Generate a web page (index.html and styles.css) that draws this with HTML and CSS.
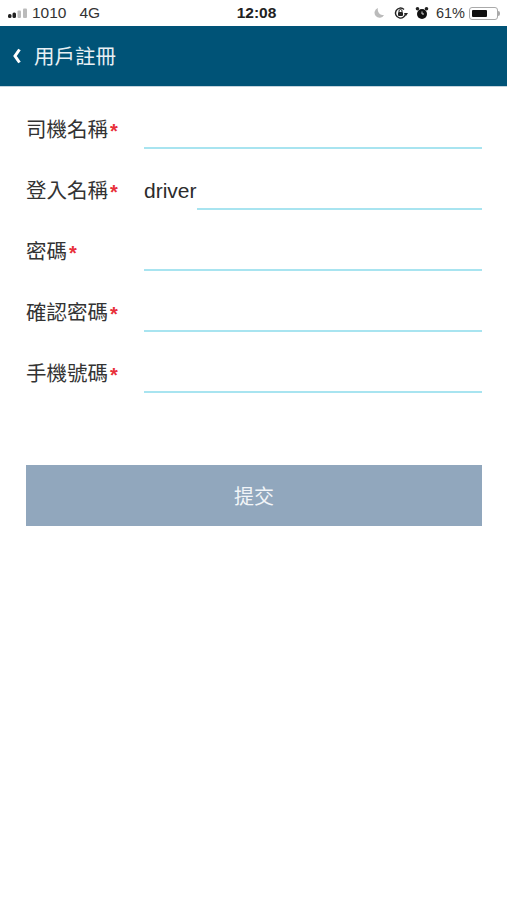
FILE: index.html

```html
<!DOCTYPE html>
<html lang="zh-Hant">
<head>
  <meta charset="UTF-8" />
  <title>用戶註冊</title>
  <link rel="stylesheet" href="styles.css">
</head>
<body>
  <div class="status-bar">
    <div class="status-left">
      <svg class="signal" width="21" height="10" viewBox="0 0 21 10">
        <rect x="0" y="6" width="3.500" height="4" rx="1.500" fill="#222"/>
        <rect x="4.500" y="4.500" width="3.500" height="5.500" rx="1.500" fill="#222"/>
        <rect x="9.500" y="2.500" width="3.500" height="7.500" rx="1" fill="#bbb"/>
        <rect x="15" y="0.500" width="4" height="9.500" rx="1" fill="#bbb"/>
      </svg>
      <span class="carrier">1010</span>
      <span class="network">4G</span>
    </div>
    <div class="status-time">12:08</div>
    <div class="status-right">
      <svg class="moon" width="12" height="12" viewBox="0 0 12 12">
        <path d="M5 1a5 5 0 1 0 6 7A5.500 5.500 0 0 1 5 1z" fill="#bbb"/>
      </svg>
      <svg class="lock" width="15" height="14" viewBox="0 0 15 14">
        <path d="M12.500 7a5 5 0 1 1-1.500-3.500" fill="none" stroke="#222" stroke-width="1.400"/>
        <path d="M11 7h4l-2 3z" fill="#222"/>
        <rect x="5" y="6" width="5" height="4" rx="1" fill="#222"/>
        <path d="M6 6V5a1.500 1.500 0 0 1 3 0v1" fill="none" stroke="#222"/>
      </svg>
      <svg class="alarm" width="14" height="14" viewBox="0 0 14 14">
        <circle cx="7" cy="8" r="5" fill="#111"/>
        <path d="M7 5.500V8h2" fill="none" stroke="#ddd"/>
        <circle cx="2.500" cy="2.800" r="1.800" fill="#222"/>
        <circle cx="11.500" cy="2.800" r="1.800" fill="#222"/>
      </svg>
      <span class="battery-pct">61%</span>
      <div class="battery"><div class="battery-level"></div></div>
      <div class="battery-tip"></div>
    </div>
  </div>

  <div class="navbar">
    <svg class="back" width="10" height="16" viewBox="0 0 10 16">
      <path d="M7.500 1.500L3 8l4.500 6.500" fill="none" stroke="#fff" stroke-width="3"/>
    </svg>
    <span class="nav-title">用戶註冊</span>
  </div>

  <form class="form">
    <div class="row">
      <label class="label">司機名稱<span class="req">*</span></label>
      <div class="field"></div>
    </div>
    <div class="row">
      <label class="label">登入名稱<span class="req">*</span></label>
      <span class="value">driver</span>
      <div class="field"></div>
    </div>
    <div class="row">
      <label class="label">密碼<span class="req">*</span></label>
      <div class="field"></div>
    </div>
    <div class="row">
      <label class="label">確認密碼<span class="req">*</span></label>
      <div class="field"></div>
    </div>
    <div class="row">
      <label class="label">手機號碼<span class="req">*</span></label>
      <div class="field"></div>
    </div>
    <div class="submit">提交</div>
  </form>
</body>
</html>
```

FILE: styles.css

```css
html {
  height: 100%;
}
body {
  margin: 0;
  height: 100%;
  background: #fff;
  color: #2b2b2b;
  font-family: "Liberation Sans", "Noto Sans CJK TC", sans-serif;
  overflow: hidden;
}
.status-bar {
  height: 26px;
  display: grid;
  grid-template-columns: 1fr auto 1fr;
  align-items: center;
  padding: 0 7px 0 8px;
  font-size: 14px;
  color: #333;
}
.status-left {
  display: flex;
  align-items: center;
}
.signal {
  margin-right: 3px;
}
.carrier {
  font-size: 15.500px;
}
.network {
  margin-left: 13px;
  font-size: 15.500px;
}
.status-time {
  font-size: 15.500px;
  font-weight: bold;
  color: #222;
  padding-left: 5px;
}
.status-right {
  display: flex;
  align-items: center;
  justify-content: flex-end;
}
.moon {
  margin-right: 8px;
}
.lock {
  margin-right: 7px;
}
.alarm {
  margin-right: 7px;
}
.battery-pct {
  margin-right: 4px;
  font-size: 14.500px;
}
.battery {
  box-sizing: border-box;
  width: 29px;
  height: 13px;
  border: 1px solid #aaa;
  border-radius: 3px;
  padding: 2px;
}
.battery-level {
  width: 65%;
  height: 100%;
  background: #111;
  border-radius: 1px;
}
.battery-tip {
  width: 2px;
  height: 5px;
  background: #aaa;
  border-radius: 0 2px 2px 0;
}
.navbar {
  height: 60px;
  background: #005377;
  display: flex;
  align-items: center;
  color: #fff;
  padding-left: 12px;
  border-bottom: 1px solid #c4d4dd;
}
.back {
  margin-right: 12px;
}
.nav-title {
  font-size: 20.500px;
  color: #e8f0f4;
  padding-bottom: 3px;
}
.form {
  padding: 1px 25px 0 26px;
}
.row {
  height: 61px;
  display: flex;
  align-items: flex-end;
}
.label {
  width: 118px;
  flex: none;
  font-size: 20.500px;
  line-height: 30px;
  padding-bottom: 3px;
  color: #333;
}
.req {
  color: #e8303a;
  font-size: 20px;
  font-weight: bold;
  margin-left: 2px;
  vertical-align: -1px;
}
.value {
  font-size: 21px;
  line-height: 30px;
  padding-bottom: 4px;
  color: #2b2b2b;
}
.field {
  flex: 1;
  height: 2px;
  background: #a8e4f0;
}
.submit {
  margin-top: 72px;
  height: 61px;
  box-sizing: border-box;
  padding-bottom: 1px;
  background: #91a7bd;
  color: #f2f5f8;
  font-size: 20px;
  display: flex;
  align-items: center;
  justify-content: center;
}
```
